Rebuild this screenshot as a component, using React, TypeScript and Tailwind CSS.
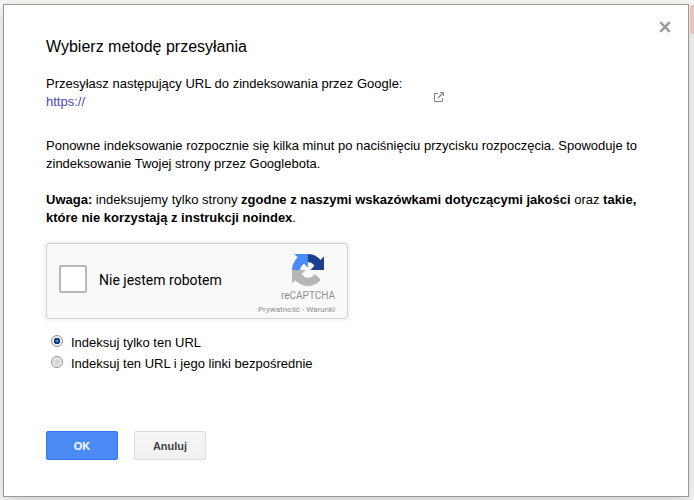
import { useState } from 'react'

const MODES = [
  { value: 'single', label: 'Indeksuj tylko ten URL' },
  { value: 'linked', label: 'Indeksuj ten URL i jego linki bezpośrednie' },
]

function RecaptchaLogo() {
  return (
    <svg viewBox="0 0 64 64" className="h-8 w-8" aria-hidden="true">
      <path
        fill="#1c3f8f"
        d="M64 31.955l-.033-1.37V4.687l-7.16 7.16C50.948 4.674 42.033.093 32.05.093c-10.4 0-19.622 4.96-25.458 12.64l11.736 11.86a15.55 15.55 0 0 1 4.754-5.334c2.05-1.6 4.952-2.906 8.968-2.906.485 0 .86.057 1.135.163 4.976.393 9.288 3.14 11.828 7.124l-8.307 8.307L64 31.953"
      />
      <path
        fill="#4a8cf5"
        d="M31.862.094l-1.37.033H4.594l7.16 7.16C4.58 13.147 0 22.06 0 32.046c0 10.4 4.96 19.622 12.64 25.458L24.5 45.768a15.55 15.55 0 0 1-5.334-4.754c-1.6-2.05-2.906-4.952-2.906-8.968 0-.485.057-.86.163-1.135.393-4.976 3.14-9.288 7.124-11.828l8.307 8.307L31.86.095"
      />
      <path
        fill="#b6b6b6"
        d="M.001 32.045l.033 1.37v25.898l7.16-7.16c5.86 7.173 14.774 11.754 24.76 11.754 10.4 0 19.622-4.96 25.458-12.64l-11.736-11.86a15.55 15.55 0 0 1-4.754 5.334c-2.05 1.6-4.952 2.906-8.968 2.906-.485 0-.86-.057-1.135-.163-4.976-.393-9.288-3.14-11.828-7.124l8.307-8.307c-10.522.04-22.4.066-27.295-.005"
      />
    </svg>
  )
}

function Recaptcha() {
  const [checked, setChecked] = useState(false)

  return (
    <div className="mt-4 flex h-[76px] w-[302px] items-start justify-between rounded-[3px] border border-[#d3d3d3] bg-[#f9f9f9] px-3 font-['Roboto',sans-serif] shadow-[0_0_4px_1px_rgba(0,0,0,0.08)]">
      <label className="mt-[21px] flex items-start gap-3 text-sm text-black">
        <input
          type="checkbox"
          checked={checked}
          onChange={(e) => setChecked(e.currentTarget.checked)}
          className="h-7 w-7 appearance-none rounded-[2px] border-2 border-[#b7b7b7] bg-white checked:bg-[#4a8cf5]"
        />
        <span className="pt-[5px]">Nie jestem robotem</span>
      </label>
      <div className="mt-[10px] flex flex-col items-end text-[#8f8f8f]">
        <div className="flex flex-col items-center">
          <RecaptchaLogo />
          <div className="mt-1 text-[10px] leading-3">reCAPTCHA</div>
        </div>
        <div className="mt-[2px] text-[8px] leading-3">
          <a href="#privacy">Prywatność</a> - <a href="#terms">Warunki</a>
        </div>
      </div>
    </div>
  )
}

export default function App() {
  const [mode, setMode] = useState('single')

  return (
    <div className="relative min-h-screen bg-[#fafaf9] pt-1 pr-[5px] pb-[3px] pl-[3px] font-['Liberation_Sans',Arial,sans-serif] text-[13px] leading-[18px] text-black">
      <div
        role="dialog"
        aria-labelledby="dialog-title"
        className="relative border border-[#999] bg-white pt-[30px] pr-[42px] pb-9 pl-[42px] shadow-[0_4px_16px_rgba(0,0,0,0.2)]"
      >
        <button type="button" aria-label="Zamknij" className="absolute top-4 right-[17px]">
          <svg viewBox="0 0 12 12" className="h-3 w-3" aria-hidden="true">
            <path d="M1.2 1.2L10.8 10.8M10.8 1.2L1.2 10.8" stroke="#9b9b9b" strokeWidth="2.4" />
          </svg>
        </button>

        <h1 id="dialog-title" className="text-base leading-6">
          Wybierz metodę przesyłania
        </h1>

        <div className="mt-4 flex items-end">
          <div className="w-[388px]">
            <p>Przesyłasz następujący URL do zindeksowania przez Google:</p>
            <a href="#url" className="text-[#4949b8]">
              https://
            </a>
          </div>
          <a href="#url" aria-label="Otwórz w nowym oknie" className="mb-[9px]">
            <svg viewBox="0 0 10 10" className="h-[10px] w-[10px]" fill="none" aria-hidden="true">
              <path d="M4 1.5H.5v8h8V6" stroke="#858585" />
              <path d="M6 .5h3.5V4" stroke="#858585" />
              <path d="M9.5.5L4 6" stroke="#858585" strokeWidth="1.2" />
            </svg>
          </a>
        </div>

        <p className="mt-[26px]">
          Ponowne indeksowanie rozpocznie się kilka minut po naciśnięciu przycisku rozpoczęcia. Spowoduje to
          zindeksowanie Twojej strony przez Googlebota.
        </p>

        <p className="mt-[18px]">
          <b>Uwaga:</b> indeksujemy tylko strony <b>zgodne z naszymi wskazówkami dotyczącymi jakości</b> oraz{' '}
          <b>takie, które nie korzystają z instrukcji noindex</b>.
        </p>

        <Recaptcha />

        <div className="mt-[13px] pl-[5px]">
          {MODES.map((m) => (
            <label key={m.value} className="flex h-[21px] items-center gap-2">
              <input
                type="radio"
                name="mode"
                value={m.value}
                checked={mode === m.value}
                onChange={() => setMode(m.value)}
                className="mb-1 h-3 w-3 appearance-none rounded-full border border-[#8e8f8f] bg-[radial-gradient(circle,#d6d6d6_30%,#f4f4f4_75%)] checked:bg-[radial-gradient(circle_at_50%_50%,#5fb4e8_0,#17479a_25%,#123064_42%,#f0f0f0_50%)]"
              />
              {m.label}
            </label>
          ))}
        </div>

        <div className="mt-[57px] flex gap-4 text-[11px] font-bold">
          <button
            type="button"
            className="h-[29px] w-[72px] rounded-[2px] border border-[#3079ed] bg-[#4a8bf5] text-white"
          >
            OK
          </button>
          <button
            type="button"
            className="h-[29px] w-[72px] rounded-[2px] border border-[#dcdcdc] bg-linear-to-b from-[#f5f5f5] to-[#f1f1f1] text-[#444]"
          >
            Anuluj
          </button>
        </div>
      </div>
      <div className="absolute top-[5px] right-0 h-[29px] w-1 rounded-l-[2px] bg-[#e6c4ba]" />
    </div>
  )
}
